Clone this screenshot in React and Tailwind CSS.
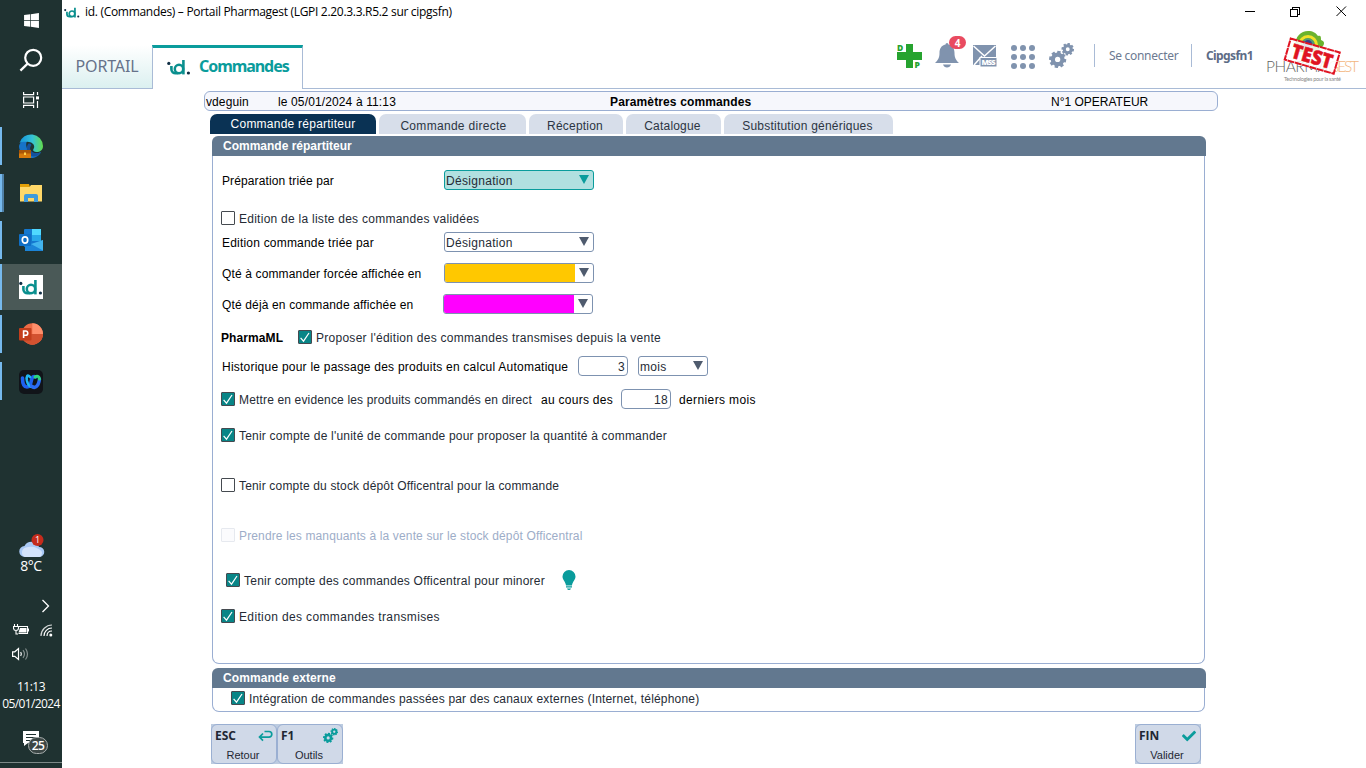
import React from "react";
import { FaWindows, FaCheck } from "react-icons/fa";

const UI = "font-['Liberation_Sans',Arial,sans-serif] text-[12px] leading-[14px] whitespace-nowrap";

function IdLogo({ className, width, height }) {
  return (
    <svg className={className} width={width} height={height} viewBox="0 0 24 16" fill="none">
      <circle cx="1.8" cy="4.4" r="1.6" fill="#123047" />
      <path d="M4.4 7v3.2c0 2.6 2 4 4.2 4h2.6" stroke="#0a8f8e" strokeWidth="2.6" />
      <circle cx="12" cy="10" r="4.2" stroke="#0a8f8e" strokeWidth="2.5" />
      <path d="M16.4 1v14.4" stroke="#0a8f8e" strokeWidth="2.6" />
      <circle cx="21.4" cy="14" r="1.6" fill="#123047" />
    </svg>
  );
}

function Gear({ cx, cy, r, color }) {
  return (
    <g>
      <circle cx={cx} cy={cy} r={r * 0.56} fill="none" stroke={color} strokeWidth={r * 0.5} />
      {[0, 45, 90, 135, 180, 225, 270, 315].map((a) => (
        <rect
          key={a}
          x={cx - r * 0.2}
          y={cy - r}
          width={r * 0.4}
          height={r * 0.34}
          fill={color}
          transform={`rotate(${a + 10} ${cx} ${cy})`}
        />
      ))}
    </g>
  );
}

function Gears({ size, color }) {
  return (
    <svg width={size} height={size} viewBox="0 0 24 24">
      <Gear cx={8.3} cy={15.8} r={8.2} color={color} />
      <Gear cx={18} cy={6} r={6} color={color} />
    </svg>
  );
}

function TaskItem({ children, active, double }) {
  return (
    <div className={`relative mb-px flex h-[46px] w-full items-center justify-center ${active ? "bg-[#4a5957]" : ""}`}>
      <div className={`absolute left-0 w-[2px] bg-[#76b9ed] ${active ? "top-0 h-[46px]" : "top-[4px] h-[38px]"}`} />
      {double && <div className="absolute left-[2px] top-[4px] h-[38px] w-[2px] bg-[#4f81a8]" />}
      {children}
    </div>
  );
}

function Taskbar() {
  return (
    <aside className="flex h-[768px] w-[62px] shrink-0 flex-col items-center bg-[#1f3231] font-['Open_Sans','Noto_Sans',sans-serif] text-white">
      <div className="flex h-10 items-center"><FaWindows size={17} /></div>
      <div className="flex h-10 items-center">
        <svg width="24" height="24" viewBox="0 0 24 24" fill="none" stroke="#fff" strokeWidth="2.2">
          <circle cx="14.2" cy="9.8" r="8" /><path d="M8.6 15.6L1.4 22.6" />
        </svg>
      </div>
      <div className="mb-[3px] flex h-10 items-center">
        <svg width="16" height="16" viewBox="0 0 16 16" fill="none" stroke="#fff" strokeWidth="1.2">
          <path d="M.6 0v2.6h10V0M.6 16v-2.6h10V16M.6 5h10v6H.6zM14.5 0v3M14.5 9v7" /><rect x="13" y="4.4" width="3" height="3" fill="#fff" stroke="none" />
        </svg>
      </div>
      <TaskItem>
        <svg width="24" height="24" viewBox="0 0 24 24">
          <defs>
            <linearGradient id="edgeTop" x1="0" x2="1"><stop offset="0" stopColor="#1593dc" /><stop offset=".55" stopColor="#35c2d6" /><stop offset="1" stopColor="#62dc4c" /></linearGradient>
          </defs>
          <path d="M0 12C1 8 5 5.500 9 6c-3 3-2 8 1 11 3 2.500 8 3 12 1-2 4-6 6-10 6A12 12 0 0 1 0 12z" fill="#1673c8" />
          <path d="M.5 9A12 12 0 0 1 24 12c0 4-3 6-6.500 6-3 0-4-1.500-3-3 2-3-.5-6.500-4.500-7C6 7.500 2.500 8 .5 9z" fill="url(#edgeTop)" />
          <path d="M9 10c-3 5 0 11 5 12.500 3 .5 6-1.500 8-4-5 1.500-9 .5-10.500-2.500-1-2 0-4 1-5-1-1.500-2.500-1.800-3.500-1z" fill="#14509c" />
          <rect x="0" y="16" width="12" height="8" fill="#d77a0c" /><rect x="0" y="16" width="12" height="3.500" fill="#a95508" /><rect x="5" y="18.500" width="2" height="2.500" fill="#ffd04a" />
        </svg>
      </TaskItem>
      <TaskItem double>
        <svg width="22" height="18" viewBox="0 0 22 18">
          <path d="M0 0h9l1 3H0z" fill="#e3a008" /><path d="M0 3h9.500l1.500-2H22v16.500H0z" fill="#ffd869" />
          <path d="M4 18v-6q0-2 2-2h10q2 0 2 2v6h-4v-4H8v4z" fill="#3f9bdc" />
        </svg>
      </TaskItem>
      <TaskItem>
        <svg width="24" height="22" viewBox="0 0 24 22">
          <rect x="5" y="0" width="17" height="18" rx="1" fill="#1478cf" /><rect x="13" y="0" width="9" height="6" fill="#50d9ff" /><rect x="13" y="6" width="9" height="6" fill="#28a8ea" />
          <path d="M6 11l9 5 9-5v11H6z" fill="#1b84d8" /><path d="M24 11v10.500L12 15z" fill="#42b4ee" />
          <rect x="0" y="5" width="12" height="12" rx="1" fill="#0f6fc6" />
          <ellipse cx="6" cy="11" rx="2.700" ry="3.200" fill="none" stroke="#fff" strokeWidth="1.700" />
        </svg>
      </TaskItem>
      <TaskItem active>
        <div className="flex h-6 w-6 items-center justify-center bg-white"><IdLogo width={24} height={16} /></div>
      </TaskItem>
      <TaskItem>
        <svg width="24" height="22" viewBox="0 0 24 22">
          <circle cx="13.300" cy="11" r="10.700" fill="#ed6c47" /><path d="M13.300 .3A10.700 10.700 0 0 1 24 11H13.300z" fill="#ff8f6b" /><path d="M24 11a10.700 10.700 0 0 1-21.400 0z" fill="#d35230" />
          <rect x="0" y="5" width="12.500" height="12.500" rx="1" fill="#c43e1c" />
          <path d="M4.600 15V8h2a2.100 2.100 0 0 1 0 4.300h-2" fill="none" stroke="#fff" strokeWidth="1.600" />
        </svg>
      </TaskItem>
      <TaskItem>
        <svg className="mt-[2px]" width="24" height="24" viewBox="0 0 24 24" fill="none" strokeLinecap="round">
          <rect width="24" height="24" rx="5" fill="#111419" />
          <path d="M3.500 8c0 6 2 9 4.500 9s4-4 4.500-7 2-4 4-3" stroke="#1e62f0" strokeWidth="3.600" />
          <path d="M11 7c-2.500-3-4-1-3 4 1 4 3 6 5 6" stroke="#21b7f0" strokeWidth="2.600" />
          <path d="M12.500 16c3 3 7 1 8-7" stroke="#2a6cf5" strokeWidth="3.400" /><path d="M16 7c2-1.500 4-1 4.500 2" stroke="#2fd67c" strokeWidth="3" />
        </svg>
      </TaskItem>
      <div className="mt-[129px] flex h-[42px] flex-col items-center">
        <svg className="ml-px" width="26" height="24" viewBox="0 0 26 24">
          <path d="M6 23a5.500 5.500 0 0 1-.5-11 8 8 0 0 1 14.500 1A5 5 0 0 1 20.500 23z" fill="#a9c9f5" /><path d="M6 23a5 5 0 0 1 1-9.500c5-2 13 0 16 4.500q0 5-3 5z" fill="#d3e3fb" />
          <circle cx="18.500" cy="6" r="6" fill="#c42b1c" /><text x="18.500" y="9.200" textAnchor="middle" fontSize="9" fill="#fff" fontFamily="Open Sans">1</text>
        </svg>
        <div className="text-[14px] leading-[16px] tracking-[-0.5px]">8°C</div>
      </div>
      <div className="mt-[23px] flex h-[14px] w-full justify-end pr-[12px]">
        <svg width="9" height="14" viewBox="0 0 9 14" fill="none" stroke="#fff" strokeWidth="1.300"><path d="M1.500 1l6 6-6 6" /></svg>
      </div>
      <div className="mt-[9px] flex h-[16px] w-full items-center justify-between pl-[13px] pr-[9px]">
        <svg width="16" height="12" viewBox="0 0 16 12" fill="none" stroke="#fff" strokeWidth="1.100">
          <path d="M1.500 0v2.500M4.500 0v2.500M.5 2.500h5v1.500a2.500 2.500 0 0 1-5 0zM3 6.500V10h2M6 2.500h8.500v7H5.500" /><path d="M7 4h6.500v4.500H5.500zM15 4.500h1v3h-1z" fill="#fff" stroke="none" />
        </svg>
        <svg width="13" height="13" viewBox="0 0 13 13" fill="none" stroke="#fff" strokeWidth="1.200">
          <path d="M1 12C1 6 6 1 12 1" opacity=".8" /><path d="M4 12c0-4.500 3.500-8 8-8M7 12c0-3 2-5 5-5" /><circle cx="10.800" cy="11" r="1.500" fill="#fff" stroke="none" />
        </svg>
      </div>
      <div className="mt-[9px] flex h-[14px] w-full pl-[12px]">
        <svg width="17" height="14" viewBox="0 0 17 14" fill="none" stroke="#fff" strokeWidth="1.200">
          <path d="M.6 4.800h2.200L6.500 1.500v11L2.800 9.300H.6zM8.700 5q1.300 2 0 4" /><path d="M11 3.200q3 3.800 0 7.600M13.500 1.500q4 5.500 0 11" opacity=".45" />
        </svg>
      </div>
      <div className="mt-[18px] h-[16px] text-[12px] leading-[16px] tracking-[-0.5px]">11:13</div>
      <div className="mt-[1px] h-[16px] whitespace-nowrap text-[12px] leading-[16px] tracking-[-0.6px]">05/01/2024</div>
      <div className="relative mt-[18px] h-[24px] w-[16px]">
        <svg width="16" height="16" viewBox="0 0 16 16"><path d="M0 1h16v12H5l-4 3v-3H0z" fill="#fff" /><path d="M3 4.500h10M3 7.500h10M3 10.500h7" stroke="#1f3231" strokeWidth="1" /></svg>
        <div className="absolute left-[5px] top-[7px] flex h-[17px] w-[20px] items-center justify-center rounded-full border border-[#a6adac] bg-[#3b4645] text-[12px] font-semibold leading-none tracking-[-0.5px]">25</div>
      </div>
      <div className="mt-[8px] h-px w-full bg-[#7d8988]" />
    </aside>
  );
}

function TitleBar() {
  return (
    <div className="flex h-[24px] w-full items-center pl-[2px] font-['Open_Sans',sans-serif] text-[12px] text-black">
      <IdLogo width={16} height={11} />
      <span className="ml-[5px] whitespace-nowrap leading-[16px] tracking-[-0.3px]">id. (Commandes) – Portail Pharmagest (LGPI 2.20.3.3.R5.2 sur cipgsfn)</span>
      <svg className="ml-auto mr-[19px]" width="104" height="12" viewBox="0 0 104 12" fill="none" stroke="#000" shapeRendering="crispEdges">
        <path d="M2 5.500h10M47.500 3.500h7v7h-7zM49.500 3V1.500h7v7H55" /><path d="M93.500 .5L103 10M103 .5L93.500 10" shapeRendering="auto" />
      </svg>
    </div>
  );
}

function PharmagestLogo() {
  return (
    <svg width="94" height="54" viewBox="0 0 94 54" fontFamily="Lato, sans-serif">
      <path d="M29 16C29 5 35 0 42 0c5 0 8 2 10 5 3-1 3 1 3 4 3 1 4 3 2 6l-6 6H31z" fill="#6ab32e" />
      <path d="M33.500 14a8.500 8.500 0 0 1 17 0" fill="none" stroke="#f0e028" strokeWidth="3" />
      <path d="M36.500 14a5.500 5.500 0 0 1 11 0" fill="none" stroke="#4f9a78" strokeWidth="2.500" />
      <circle cx="42" cy="13.500" r="4.400" fill="#3a3f8c" />
      <text x="0" y="41" fontSize="15.500" fontWeight="300" fill="#5f5f5f" textLength="62">PHARMA</text>
      <text x="62" y="41" fontSize="15.500" fontWeight="300" fill="#f3b57c" textLength="31">GEST</text>
      <text x="18" y="49.500" fontSize="5.500" fill="#8a8a8a" textLength="57">Technologies pour la santé</text>
      <g transform="rotate(16 46 24)">
        <rect x="21" y="14" width="51" height="22" fill="#fff" fillOpacity=".86" stroke="#e01422" strokeWidth="2" strokeDasharray="7 .6" />
        <text x="25.500" y="32.300" fontSize="20" fontFamily="Open Sans" fontWeight="800" fill="#e01422" stroke="#e01422" strokeWidth=".5" textLength="42" lengthAdjust="spacingAndGlyphs">TEST</text>
      </g>
    </svg>
  );
}

function Header() {
  return (
    <header className="flex h-[65px] w-full border-b border-[#a9bbd6] pt-[21px] font-['Noto_Sans','Open_Sans',sans-serif]">
      <div className="flex h-[43px] w-[90px] items-center justify-center bg-gradient-to-b from-white to-[#dbf0f0] pb-[2px] text-[16px] text-[#66728a]">
        <span className="tracking-[-0.15px]">PORTAIL</span>
      </div>
      <div className="flex h-[44px] w-[151px] items-center border-x border-t-[3px] border-x-[#a9bbd6] border-t-[#0a9c9c] bg-white pb-[5px] pl-[14px]">
        <IdLogo className="mt-[2px]" width={24} height={16} />
        <span className="ml-[8px] text-[16px] font-bold tracking-[-1.06px] text-[#0a9c9c]">Commandes</span>
      </div>
      <div className="ml-auto -mt-[21px] flex h-[64px] items-start text-[#8093ae]">
        <svg className="mt-[20px]" width="26" height="25" viewBox="0 0 26 25" fill="#26a32f">
          <path d="M9 0h7v8h9v8h-9v8H9v-8H0V8h9z" />
          <rect x="17" y="16" width="9" height="9" fill="#fff" />
          <text x="0" y="6.900" fontSize="8.500" fontFamily="Open Sans" fontWeight="800">D</text><text x="17.500" y="23.500" fontSize="8.500" fontFamily="Open Sans" fontWeight="800">P</text>
        </svg>
        <div className="relative ml-[12px] mt-[19px] h-[25px] w-[24px]">
          <svg width="24" height="25" viewBox="0 0 24 25" fill="currentColor"><path d="M10.500 1.500a1.500 1.500 0 0 1 3 0C18 2.500 19.500 6 19.500 10c0 5 1.500 7 4.500 10H0c3-3 4.500-5 4.500-10 0-4 1.500-7.500 6-8.500zM8 21.500h8q-1 3-4 3t-4-3z" /></svg>
          <div className="absolute -top-[7px] left-[14px] flex h-[13px] w-[17px] items-center justify-center rounded-full bg-[#e94b60] text-[10px] font-bold leading-none text-white">4</div>
        </div>
        <svg className="ml-[14px] mt-[21px]" width="24" height="22" viewBox="0 0 24 22" fill="currentColor">
          <path d="M0 0h23v12H7v8H0z" /><path d="M.5 1L11.500 11 22.500 1M1 20l8-9" fill="none" stroke="#fff" strokeWidth="1.500" />
          <rect x="7" y="12.500" width="17" height="9.500" stroke="#fff" strokeWidth="1" />
          <text x="8.500" y="20.200" fontSize="7.500" fontFamily="Open Sans" fontWeight="800" fill="#fff" textLength="14">MSS</text>
        </svg>
        <svg className="ml-[14px] mt-[21px]" width="24" height="24" viewBox="0 0 24 24" fill="currentColor">
          {[3, 12, 21].map((y) => [3, 12, 21].map((x) => <circle key={`${x}-${y}`} cx={x} cy={y} r="3" />))}
        </svg>
        <div className="ml-[14px] mt-[19px]"><Gears size={25} color="#8093ae" /></div>
        <div className="ml-[20px] mt-[20px] h-[23px] w-px bg-[#a9bbd6]" />
        <span className="ml-[14px] mt-[22px] w-[82px] whitespace-nowrap text-[12px] leading-[20px] tracking-[-0.3px] text-[#6c7a91]">Se connecter</span>
        <div className="mt-[20px] h-[23px] w-px bg-[#a9bbd6]" />
        <span className="ml-[14px] mt-[22px] w-[60px] whitespace-nowrap text-[12px] font-bold leading-[20px] tracking-[-0.6px] text-[#5d6c86]">Cipgsfn1</span>
        <div className="mr-[6px] mt-[7px]"><PharmagestLogo /></div>
      </div>
    </header>
  );
}

function Check({ checked, disabled }) {
  return (
    <svg className="mr-[4px] shrink-0" width="14" height="14" viewBox="0 0 14 14" fill="none">
      <rect x=".5" y=".5" width="13" height="13" rx=".5" fill={checked ? "#088587" : disabled ? "#fbfbfd" : "#fff"} stroke={disabled ? "#e6e9ef" : "#454a50"} />
      {checked && <path d="M2.600 7.800l2.900 3.400L11 3" stroke="#fff" strokeWidth="1.200" />}
    </svg>
  );
}

function Arrow({ color }) {
  return <svg width="10" height="9" viewBox="0 0 10 9"><path d="M0 0h10L5 9z" fill={color} /></svg>;
}

function Select({ value, className = "w-[150px]", focused, fill }) {
  return (
    <div className={`flex h-[20px] items-start overflow-hidden rounded-[3px] border ${focused ? "border-[#0a9c9c] bg-[#b1e0e0]" : "border-[#7d92b0] bg-white"} ${className}`}>
      {fill ? <div className={`h-full w-[130px] ${fill}`} /> : <span className="pl-[1px] pt-[3px] tracking-[0.3px] text-[#252b35]">{value}</span>}
      <div className="ml-auto mr-[4px] mt-[4px]"><Arrow color={focused ? "#0a9c9c" : "#4f5b6e"} /></div>
    </div>
  );
}

function NumberBox({ value, className = "" }) {
  return <div className={`flex h-[20px] w-[50px] items-center justify-end rounded-[4px] border border-[#7d92b0] bg-white pr-[2px] pt-px tracking-[0.36px] text-[#252b35] ${className}`}>{value}</div>;
}

function Row({ className = "", children }) {
  return <div className={`flex h-[20px] items-center ${className}`}>{children}</div>;
}

function Label({ className = "", children }) {
  return <span className={`pt-[2px] ${className}`}>{children}</span>;
}

function Tab({ active, className, children }) {
  return (
    <div className={`flex h-[20px] items-center justify-center rounded-t-[7px] ${active ? "bg-[#0a3254] pb-px text-white" : "bg-[#d7deea] pt-[3px] text-[#2c3543]"} ${className}`}>
      {children}
    </div>
  );
}

function ActionKey({ code, label, icon }) {
  return (
    <div className="h-[40px] w-[66px] bg-[#bccbe0]">
      <div className="flex h-[40px] w-full flex-col rounded-[6px] border border-[#9aafd2] bg-[#d0d9e8] text-[#1f2733]">
        <div className="flex h-[21px] items-center justify-between pl-[3px] pr-[4px] font-['Open_Sans',sans-serif] text-[12px] font-bold">
          <span>{code}</span>{icon}
        </div>
        <span className="mt-[2px] pr-[2px] text-center text-[11px]">{label}</span>
      </div>
    </div>
  );
}

export default function App() {
  return (
    <div className="flex h-[768px] w-[1366px] overflow-hidden bg-white">
      <Taskbar />
      <main className="flex min-w-0 flex-1 flex-col">
        <TitleBar />
        <Header />
        <div className={`${UI} flex flex-col text-black`}>
          <div className="ml-[142px] mt-[2px] flex h-[20px] w-[1014px] items-center rounded-[6px] border border-[#9aaed2] bg-[#f6f7fc] pl-[1px] pt-px">
            <span className="w-[72px] tracking-[0.1px]">vdeguin</span>
            <span className="w-[332px] tracking-[0.13px]">le 05/01/2024 à 11:13</span>
            <span className="w-[441px] font-bold tracking-[0.13px]">Paramètres commandes</span>
            <span>N°1 OPERATEUR</span>
          </div>
          <nav className="ml-[148px] mt-[3px] flex gap-[3px]">
            <Tab active className="w-[166px] tracking-[0.24px]">Commande répartiteur</Tab>
            <Tab className="w-[147px] pl-[2px] tracking-[0.3px]">Commande directe</Tab>
            <Tab className="w-[94px] pr-[2px] tracking-[0.2px]">Réception</Tab>
            <Tab className="w-[95px] pr-[2px] tracking-[0.2px]">Catalogue</Tab>
            <Tab className="w-[169px] pr-[2px] tracking-[0.22px]">Substitution génériques</Tab>
          </nav>
          <section className="ml-[150px] mt-[2px] w-[994px]">
            <h2 className="h-[20px] rounded-t-[6px] bg-[#62788f] pl-[11px] pt-[3px] font-bold text-white">Commande répartiteur</h2>
            <div className="h-[508px] w-[993px] rounded-b-[7px] border border-t-0 border-[#9aaed2] pl-[8px] pt-[14px] text-[#252b35]">
              <Row><Label className="w-[223px] pl-px tracking-[0.12px] text-black">Préparation triée par</Label><Select focused value="Désignation" /></Row>
              <Row className="mt-[18px]"><Check /><Label className="tracking-[0.26px]">Edition de la liste des commandes validées</Label></Row>
              <Row className="mt-[4px]"><Label className="w-[223px] pl-px tracking-[0.2px] text-black">Edition commande triée par</Label><Select value="Désignation" /></Row>
              <Row className="mt-[11px]"><Label className="w-[223px] pl-px tracking-[0.14px] text-black">Qté à commander forcée affichée en</Label><Select fill="bg-[#ffc800]" /></Row>
              <Row className="mt-[11px]"><Label className="w-[222px] pl-px tracking-[0.15px] text-black">Qté déjà en commande affichée en</Label><Select fill="bg-[#ff00ff]" /></Row>
              <Row className="mt-[13px]"><Label className="w-[77px] font-bold tracking-[0.1px] text-black">PharmaML</Label><Check checked /><Label className="tracking-[0.27px]">Proposer l'édition des commandes transmises depuis la vente</Label></Row>
              <Row className="mt-[9px]"><Label className="w-[357px] pl-px tracking-[0.23px] text-black">Historique pour le passage des produits en calcul Automatique</Label><NumberBox value="3" /><Select className="ml-[10px] w-[70px]" value="mois" /></Row>
              <Row className="mt-[13px]"><Check checked /><Label className="w-[302px] tracking-[0.16px]">Mettre en evidence les produits commandés en direct</Label><Label className="w-[80px] tracking-[0.27px] text-black">au cours des</Label><NumberBox value="18" /><Label className="ml-[8px] tracking-[0.38px] text-black">derniers mois</Label></Row>
              <Row className="mt-[16px]"><Check checked /><Label className="tracking-[0.21px]">Tenir compte de l'unité de commande pour proposer la quantité à commander</Label></Row>
              <Row className="mt-[30px]"><Check /><Label className="tracking-[0.17px]">Tenir compte du stock dépôt Officentral pour la commande</Label></Row>
              <Row className="mt-[30px]"><Check disabled /><Label className="tracking-[0.14px] text-[#9dadc8]">Prendre les manquants à la vente sur le stock dépôt Officentral</Label></Row>
              <Row className="mt-[25px] pl-[5px]">
                <Check checked /><Label className="w-[318px] tracking-[0.23px]">Tenir compte des commandes Officentral pour minorer</Label>
                <svg width="14" height="20" viewBox="0 0 14 20"><path d="M7 0a6.500 6.500 0 0 1 6.500 6.500c0 3.500-3 5-3.500 9H4c-.5-4-3.500-5.500-3.500-9A6.500 6.500 0 0 1 7 0zM4 16.300h6v1.200H4zM5 18.400h4q-.5 1.600-2 1.600t-2-1.600z" fill="#0a9c9c" /></svg>
              </Row>
              <Row className="mt-[16px]"><Check checked /><Label className="tracking-[0.36px]">Edition des commandes transmises</Label></Row>
            </div>
            <h2 className="mt-[4px] h-[20px] rounded-t-[6px] bg-[#62788f] pl-[11px] pt-[3px] font-bold tracking-[0.08px] text-white">Commande externe</h2>
            <div className="h-[24px] w-[993px] rounded-b-[7px] border border-t-0 border-[#9aaed2] pl-[18px] text-[#252b35]">
              <Row><Check checked /><Label className="tracking-[0.18px]">Intégration de commandes passées par des canaux externes (Internet, téléphone)</Label></Row>
            </div>
          </section>
          <footer className="ml-[149px] mt-[12px] flex w-[990px]">
            <ActionKey code="ESC" label="Retour" icon={<svg className="-mr-px" width="15" height="12" viewBox="0 0 15 12" fill="none" stroke="#0a9c9c" strokeWidth="1.700"><path d="M6.500 1.500h4.500a2.800 2.800 0 0 1 0 5.600H2M5 3.500L1.500 7.100 5 10.700" /></svg>} />
            <ActionKey code="F1" label="Outils" icon={<Gears size={15} color="#0a9c9c" />} />
            <div className="ml-auto"><ActionKey code="FIN" label="Valider" icon={<FaCheck size={14} color="#0a9c9c" />} /></div>
          </footer>
        </div>
      </main>
    </div>
  );
}
